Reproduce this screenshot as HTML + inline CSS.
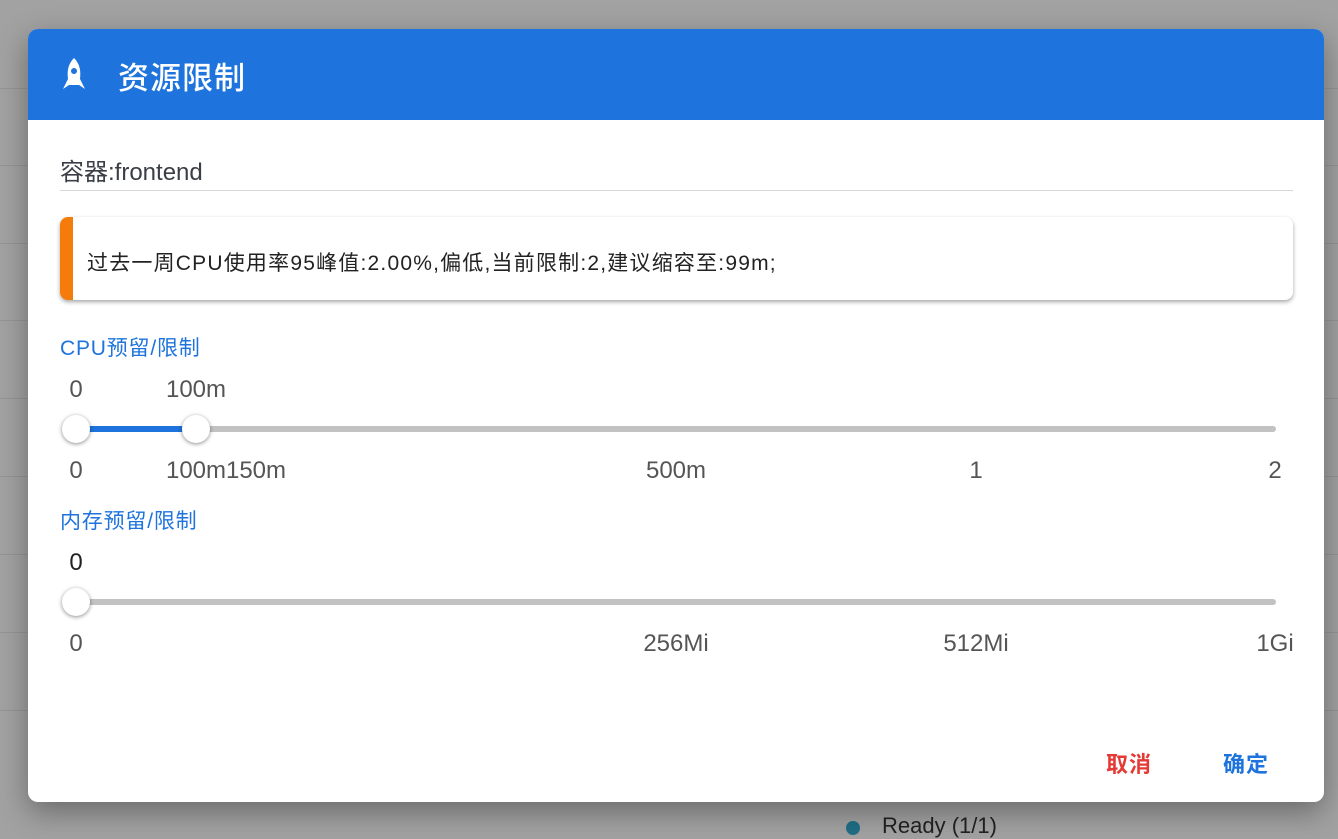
<!DOCTYPE html>
<html><head><meta charset="utf-8"><style>
*{margin:0;padding:0;box-sizing:border-box}
body{width:1338px;height:838px;background:#a2a2a2;position:relative;overflow:hidden;font-family:"Liberation Sans","Noto Sans CJK SC",sans-serif}
.ln{position:absolute;left:0;right:0;height:1px;background:#959595}
.dlg{position:absolute;left:28px;top:29px;width:1296px;height:773px;background:#fff;border-radius:10px;overflow:hidden;box-shadow:0 10px 30px rgba(0,0,0,.35)}
.hd{position:absolute;left:0;top:0;right:0;height:91px;background:#1e73dd}
.hd .t{position:absolute;left:90px;top:24px;color:#fff;font-size:31px;font-weight:500;letter-spacing:1px}
.a{position:absolute;white-space:nowrap}
.lab{font-size:24px;color:#555;transform:translateX(-50%)}
.track{position:absolute;left:48px;width:1200px;height:6px;background:#c2c2c2;border-radius:3px}
.th{position:absolute;width:28px;height:28px;border-radius:50%;background:#fff;box-shadow:0 1px 4px rgba(0,0,0,.45);transform:translate(-50%,-50%)}
</style></head><body>
<div class="ln" style="top:88px"></div><div class="ln" style="top:165px"></div><div class="ln" style="top:243px"></div><div class="ln" style="top:320px"></div><div class="ln" style="top:398px"></div><div class="ln" style="top:476px"></div><div class="ln" style="top:554px"></div><div class="ln" style="top:632px"></div><div class="ln" style="top:710px"></div>
<div class="a" style="left:846px;top:821px;width:14px;height:14px;border-radius:50%;background:#1f6f86"></div>
<div class="a" style="left:882px;top:813px;font-size:22px;color:#222">Ready (1/1)</div>
<div class="dlg">
<div class="hd">
<svg class="a" style="left:32px;top:28px" width="28" height="34" viewBox="0 0 28 34"><path d="M14 1C8 7 7 14 8 22L6 26 3 32 9 28 19 28 25 32 22 26 20 22C21 14 20 7 14 1Z" fill="#fff"/><circle cx="14" cy="14" r="3" fill="#1e73dd"/></svg>
<div class="t">资源限制</div>
</div>
<div class="a" style="left:32px;top:123px;font-size:24px;color:#3a3f47">容器:frontend</div>
<div class="a" style="left:32px;top:161px;width:1233px;height:1px;background:#d8d8d8"></div>
<div class="a" style="left:32px;top:188px;width:1233px;height:83px;border-radius:8px;box-shadow:0 2px 4px rgba(0,0,0,.35);border-left:13px solid #f57c0a;background:#fff"></div>
<div class="a" style="left:59px;top:218px;font-size:21px;color:#222;letter-spacing:1.2px">过去一周CPU使用率95峰值:2.00%,偏低,当前限制:2,建议缩容至:99m;</div>
<div class="a" style="left:32px;top:303px;font-size:21px;color:#1e73dd;letter-spacing:0.8px">CPU预留/限制</div>
<div class="a lab" style="left:48px;top:347px">0</div>
<div class="a lab" style="left:168px;top:347px">100m</div>
<div class="track" style="top:397px"></div>
<div class="a" style="left:48px;top:397px;width:120px;height:6px;background:#1e73dd"></div>
<div class="th" style="left:48px;top:400px"></div><div class="th" style="left:168px;top:400px"></div>
<div class="a lab" style="left:48px;top:428px">0</div>
<div class="a lab" style="left:168px;top:428px">100m</div>
<div class="a lab" style="left:228px;top:428px">150m</div>
<div class="a lab" style="left:648px;top:428px">500m</div>
<div class="a lab" style="left:948px;top:428px">1</div>
<div class="a lab" style="left:1247px;top:428px">2</div>
<div class="a" style="left:32px;top:476px;font-size:21px;color:#1e73dd;letter-spacing:0.8px">内存预留/限制</div>
<div class="a lab" style="left:48px;top:520px;color:#222">0</div>
<div class="track" style="top:570px"></div>
<div class="th" style="left:48px;top:573px"></div>
<div class="a lab" style="left:48px;top:601px">0</div>
<div class="a lab" style="left:648px;top:601px">256Mi</div>
<div class="a lab" style="left:948px;top:601px">512Mi</div>
<div class="a lab" style="left:1247px;top:601px">1Gi</div>
<div class="a" style="left:1078px;top:718px;font-size:22px;font-weight:bold;color:#e53935;letter-spacing:1px">取消</div>
<div class="a" style="left:1195px;top:718px;font-size:22px;font-weight:bold;color:#1e73dd;letter-spacing:1px">确定</div>
</div>
</body></html>
